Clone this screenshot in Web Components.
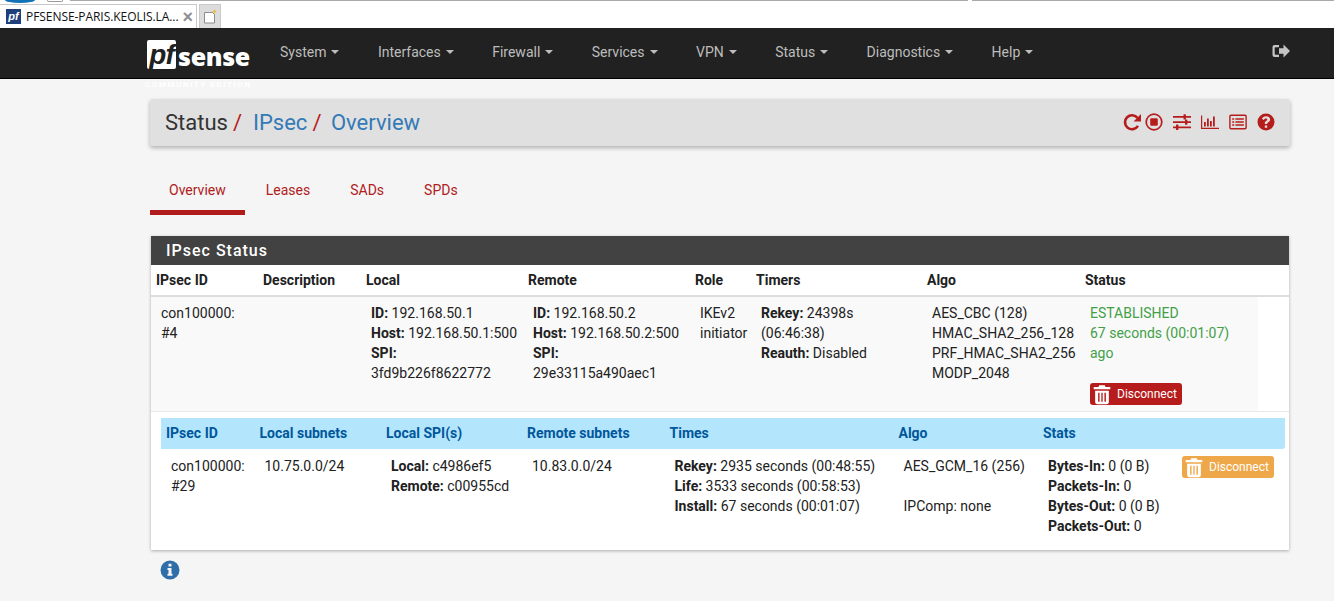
<!DOCTYPE html>
<html>
<head>
<meta charset="utf-8">
<title>pfSense IPsec Overview</title>
<style>
    html, body { margin: 0; padding: 0; background: #f5f5f5; overflow: hidden; }
    body { font: 14px/20px Roboto, sans-serif; color: #212121; height: 601px; }
</style>
</head>
<body>
<pf-browser-tabs></pf-browser-tabs>
<pf-navbar></pf-navbar>
<pf-page>
    <pf-breadcrumb></pf-breadcrumb>
    <pf-tabs></pf-tabs>
    <pf-panel heading="IPsec Status">
        <sa-table></sa-table>
    </pf-panel>
    <pf-info></pf-info>
</pf-page>

<script>
const ICONS = {
    signout: `<path d="M2.500 3h4.500v2.200H3.500a.8.800 0 0 0-.8.800v6a.8.800 0 0 0 .8.800H7V15H2.500A2 2 0 0 1 .5 13V5a2 2 0 0 1 2-2z"/><path d="M7 6.300h4.500V2.500L18 9l-6.500 6.500v-3.800H7z"/>`,
    repeat: `<path fill="none" stroke="currentColor" stroke-width="2.600" d="M15 12.900A7 7 0 1 1 14.600 5"/><path d="M18 1v7.400h-7.400z"/>`,
    stop: `<circle cx="9" cy="9" r="7.800" fill="none" stroke="currentColor" stroke-width="1.700"/><rect x="5.200" y="5.200" width="7.600" height="7.600" rx="1.200"/>`,
    sliders: `<path d="M0 3h18v1.800H0zM0 8.200h18V10H0zM0 13.400h18v1.800H0z"/><rect x="10.500" y="1.200" width="2.400" height="5.400" rx=".5"/><rect x="12" y="6.400" width="2.400" height="5.400" rx=".5"/><rect x="3" y="11.600" width="2.400" height="5.400" rx=".5"/>`,
    chart: `<path d="M0 2.500h1.200v12.300H18V16H0z"/><path d="M3 9h1.800v4.500H3zM6 5.500h1.800v8H6zM9 8h1.800v5.500H9zM12 3.500h1.800v10H12z"/>`,
    list: `<path fill-rule="evenodd" d="M2 1.500h14A1.800 1.800 0 0 1 17.800 3.300v11.400a1.800 1.800 0 0 1-1.800 1.800H2A1.800 1.800 0 0 1 .2 14.700V3.300A1.800 1.800 0 0 1 2 1.500zM2 3a.4.400 0 0 0-.4.400v11.200a.4.400 0 0 0 .4.400h14a.4.400 0 0 0 .4-.4V3.400A.4.400 0 0 0 16 3z"/><path d="M3.200 5.200h2v1.600h-2zM6.400 5.200h8.400v1.600H6.400zM3.200 8.200h2v1.600h-2zM6.400 8.200h8.400v1.600H6.400zM3.200 11.200h2v1.600h-2zM6.400 11.200h8.400v1.600H6.400z"/>`,
    question: `<path fill-rule="evenodd" d="M9 .5a8.500 8.500 0 1 1 0 17 8.500 8.500 0 0 1 0-17zM7.800 12.500v2.200h2.400v-2.200zM9 3.300c-2 0-3.400 1-4 2.500l1.700 1.200c.5-.9 1.100-1.500 2.200-1.500.8 0 1.400.4 1.400 1.100 0 .7-.5 1-1.200 1.500-.9.600-1.300 1.200-1.300 2.300v.6h2.400v-.4c0-.6.3-.9 1-1.400 1-.7 1.900-1.400 1.900-2.800 0-1.900-1.800-3.100-4.100-3.100z"/>`,
    trash: `<path d="M5.500 1.200h5l.7 1.600H15.500v2H.5v-2h4.300z"/><path fill-rule="evenodd" d="M1.800 6h12.400v10.500a2 2 0 0 1-2 1.900H3.800a2 2 0 0 1-2-1.900zM4.500 8v8h1.300V8zM7.400 8v8h1.200V8zM10.200 8v8h1.300V8z"/>`,
    info: `<path fill-rule="evenodd" d="M10 .5a9.500 9.500 0 1 1 0 19 9.500 9.500 0 0 1 0-19zM8.500 3.800v2.700h3V3.800zM7.500 8v2h1v3.800h-1v2h5v-2h-1V8z"/>`
};

class PfIcon extends HTMLElement {
    connectedCallback() {
        const w = this.getAttribute("w") || 18;
        const h = this.getAttribute("h") || 18;
        const box = this.getAttribute("box") || "0 0 18 18";
        this.attachShadow({ mode: "open" }).innerHTML = `
            <style>:host { display: inline-flex; line-height: 0; } svg { display: block; fill: currentColor; }</style>
            <svg width="${w}" height="${h}" viewBox="${box}">${ICONS[this.getAttribute("name")]}</svg>`;
    }
}
customElements.define("pf-icon", PfIcon);

class PfBrowserTabs extends HTMLElement {
    constructor() {
        super();
        this.attachShadow({ mode: "open" }).innerHTML = `
            <style>
                :host { display: flex; height: 28px; background: #fff; position: relative; font: 12px/16px "Open Sans", sans-serif; color: #111; box-sizing: border-box; padding-top: 4px; overflow: hidden; }
                .sliver { position: absolute; top: 0; height: 1px; background: #a9a9a9; }
                .cap { position: absolute; top: 0; }
                .tab { width: 197px; height: 24px; box-sizing: border-box; border: 1px solid #c9c9c9; border-bottom: 0; border-left: 0; display: flex; align-items: center; padding-left: 6px; white-space: nowrap; }
                .fav { width: 15px; height: 15px; background: #1f3f7c; color: #fff; font: italic bold 11px/15px "Liberation Sans", sans-serif; text-align: center; margin-right: 5px; flex: none; }
                .name { flex: 1; letter-spacing: -.06px; }
                .close { color: #8f8f8f; font: bold 18px/16px "Liberation Sans", sans-serif; margin-right: 3px; }
                .new { width: 22px; height: 24px; box-sizing: border-box; margin-left: 2px; background: #dcdcdc; border: 1px solid #c9c9c9; border-bottom: 0; display: flex; align-items: center; justify-content: center; }
            </style>
            <span class="cap" style="left:5px;width:30px;height:3px;background:#1272b8;border-radius:0 0 15px 15px / 0 0 3px 3px"></span>
            <span class="cap" style="left:47px;width:14px;height:1px;background:#fff;border:1px solid #999;border-top:0;border-radius:0 0 7px 7px"></span>
            <span class="sliver" style="left:70px;width:898px"></span>
            <span class="sliver" style="left:972px;right:0"></span>
            <div class="tab"><span class="fav">pf</span><span class="name">PFSENSE-PARIS.KEOLIS.LA...</span><span class="close">×</span></div>
            <div class="new">
                <svg width="16" height="16" viewBox="0 0 16 16"><path d="M2.500 3.500h8l2 2v8.500h-10z" fill="#fff" stroke="#8c8c8c"/><path d="M12.500 0l.8 1.700 1.700.8-1.700.8-.8 1.700-.8-1.700-1.700-.8 1.700-.8z" fill="#f5b73d"/></svg>
            </div>`;
    }
}
customElements.define("pf-browser-tabs", PfBrowserTabs);

class PfNavbar extends HTMLElement {
    constructor() {
        super();
        const items = ["System", "Interfaces", "Firewall", "Services", "VPN", "Status", "Diagnostics", "Help"];
        this.attachShadow({ mode: "open" }).innerHTML = `
            <style>
                :host { display: flex; align-items: center; height: 51px; box-sizing: border-box; background: #212121; border-bottom: 1px solid #000; position: relative; padding-left: 147px; color: #bdbdbd; font: 14px/20px Roboto, sans-serif; }
                .logo { display: flex; align-items: flex-start; width: 133px; flex: none; height: 29px; position: relative; top: 1px; }
                .pf { width: 29px; height: 29px; background: #fff; border-radius: 2px; color: #212121; font: italic 900 28px/29px "Liberation Sans", sans-serif; letter-spacing: -1px; text-align: center; flex: none; }
                .sense { color: #fff; font: 800 25px/29px "Open Sans", sans-serif; letter-spacing: -.3px; margin-left: 2px; margin-top: 2px; }
                .edition { position: absolute; left: -2px; top: 40px; color: #fff; font: bold 8px/10px Roboto, sans-serif; letter-spacing: 1.550px; white-space: nowrap; }
                nav { display: flex; gap: 38.450px; margin-top: -2px; }
                .item { display: flex; align-items: center; white-space: nowrap; }
                .caret { width: 0; height: 0; border: 4px solid transparent; border-top-color: currentColor; border-bottom: 0; margin-left: 5px; }
                .out { margin-left: auto; margin-right: 44px; margin-top: -5px; color: #c4c4c4; }
            </style>
            <div class="logo"><span class="pf">pf</span><span class="sense">sense</span><span class="edition">COMMUNITY EDITION</span></div>
            <nav>${items.map(i => `<span class="item">${i}<span class="caret"></span></span>`).join("")}</nav>
            <pf-icon class="out" name="signout"></pf-icon>`;
    }
}
customElements.define("pf-navbar", PfNavbar);

class PfPage extends HTMLElement {
    constructor() {
        super();
        this.attachShadow({ mode: "open" }).innerHTML = `
            <style>:host { display: block; width: 1140px; margin-left: 150px; padding-top: 20px; }</style>
            <slot></slot>`;
    }
}
customElements.define("pf-page", PfPage);

class PfBreadcrumb extends HTMLElement {
    constructor() {
        super();
        this.attachShadow({ mode: "open" }).innerHTML = `
            <style>
                :host { display: flex; align-items: center; justify-content: space-between; height: 47px; padding: 0 15px; background: #e0e0e0; border-radius: 3px; box-shadow: 0 2px 4px rgba(0,0,0,.28); font: 22px/30px Roboto, sans-serif; color: #333; }
                .crumbs { white-space: nowrap; }
                a { color: #337ab7; }
                i { font-style: normal; color: #b71c1c; margin: 0 11px 0 5px; }
                i.last { margin-right: 9.500px; }
                .tools { display: flex; align-items: center; color: #b71c1c; margin-top: -2px; }
            </style>
            <div class="crumbs">Status<i>/</i><a>IPsec</a><i class="last">/</i><a>Overview</a></div>
            <div class="tools">
                <pf-icon name="repeat" style="margin-right:4px"></pf-icon>
                <pf-icon name="stop" style="margin-right:10px"></pf-icon>
                <pf-icon name="sliders" style="margin-right:10px"></pf-icon>
                <pf-icon name="chart" style="margin-right:10px"></pf-icon>
                <pf-icon name="list" style="margin-right:10px"></pf-icon>
                <pf-icon name="question"></pf-icon>
            </div>`;
    }
}
customElements.define("pf-breadcrumb", PfBreadcrumb);

class PfTabs extends HTMLElement {
    constructor() {
        super();
        const tabs = ["Overview", "Leases", "SADs", "SPDs"];
        this.attachShadow({ mode: "open" }).innerHTML = `
            <style>
                :host { display: flex; gap: 2px; margin-top: 21px; font: 14px/20px Roboto, sans-serif; color: #b02020; }
                span { display: block; height: 48px; box-sizing: border-box; padding: 13px 19px 0; border-bottom: 5px solid transparent; }
                .on { border-bottom-color: #b01c1c; }
            </style>
            ${tabs.map((t, i) => `<span class="${i === 0 ? "on" : ""}">${t}</span>`).join("")}`;
    }
}
customElements.define("pf-tabs", PfTabs);

class PfPanel extends HTMLElement {
    constructor() {
        super();
        this.attachShadow({ mode: "open" }).innerHTML = `
            <style>
                :host { display: block; margin: 21px 1px 0; background: #fff; box-shadow: 0 1px 3px rgba(0,0,0,.3); }
                h2 { margin: 0; height: 29px; padding: 0 15px; background: #424242; color: #fff; font: 500 16px/30px Roboto, sans-serif; letter-spacing: 1px; }
            </style>
            <h2></h2>
            <slot></slot>`;
        this.shadowRoot.querySelector("h2").textContent = this.getAttribute("heading");
    }
}
customElements.define("pf-panel", PfPanel);

class PfButton extends HTMLElement {
    connectedCallback() {
        this.attachShadow({ mode: "open" }).innerHTML = `
            <style>
                :host { display: inline-flex; align-items: center; width: 92px; height: 22px; box-sizing: border-box; padding-left: 3px; border-radius: 3px; color: #fff; font: 12px/22px Roboto, sans-serif; background: ${this.getAttribute("color")}; white-space: nowrap; overflow: hidden; }
                pf-icon { margin-right: 6px; }
            </style>
            <pf-icon name="trash" w="18" h="21" box="0 0 16 19"></pf-icon><slot></slot>`;
    }
}
customElements.define("pf-button", PfButton);

class SaTable extends HTMLElement {
    constructor() {
        super();
        this.attachShadow({ mode: "open" }).innerHTML = `
            <style>
                :host { display: block; font: 14px/20px Roboto, sans-serif; color: #212121; }
                b { font-weight: 700; }
                table { border-collapse: collapse; table-layout: fixed; }
                td, th { padding: 0; text-align: left; vertical-align: top; }
                .parent { width: 1138px; }
                .parent th { height: 30px; padding: 5px; box-sizing: border-box; border-bottom: 2px solid #ddd; font-weight: 700; }
                .parent .row td { background: #f9f9f9; padding: 6px 10px 6px; box-sizing: border-box; height: 115px; border-bottom: 1px solid #e8e8e8; }
                .parent .row td.blank { background: #fff; padding: 0; }
                .green { color: #43a047; }
                .parent pf-button { margin-top: 20px; display: flex; }
                .wrap { padding: 6px 4px 14px 10px; }
                .child { width: 1124px; }
                .child th { height: 31px; padding: 0 5px 2px; background: #b3e5fc; color: #01579b; font-weight: 700; box-sizing: border-box; vertical-align: middle; }
                .child th:last-child { border-radius: 0 0 3px 0; }
                .child td { padding: 7px 10px 0; }
            </style>
            <table class="parent">
                <colgroup>
                    <col style="width:107px"><col style="width:103px"><col style="width:162px"><col style="width:167px"><col style="width:61px"><col style="width:171px"><col style="width:158px"><col style="width:178px"><col>
                </colgroup>
                <tr>
                    <th>IPsec ID</th><th>Description</th><th>Local</th><th>Remote</th><th>Role</th><th>Timers</th><th>Algo</th><th colspan="2">Status</th>
                </tr>
                <tr class="row">
                    <td>con100000:<br>#4</td>
                    <td></td>
                    <td style="padding-right:0"><b>ID:</b> 192.168.50.1<br><b>Host:</b> 192.168.50.1:500<br><b>SPI:</b><br>3fd9b226f8622772</td>
                    <td style="padding-right:0"><b>ID:</b> 192.168.50.2<br><b>Host:</b> 192.168.50.2:500<br><b>SPI:</b><br>29e33115a490aec1</td>
                    <td style="padding-right:0">IKEv2<br>initiator</td>
                    <td style="padding-right:0"><b>Rekey:</b> 24398s<br>(06:46:38)<br><b>Reauth:</b> Disabled</td>
                    <td style="padding-right:0">AES_CBC (128)<br>HMAC_SHA2_256_128<br>PRF_HMAC_SHA2_256<br>MODP_2048</td>
                    <td style="padding-right:14px"><span class="green">ESTABLISHED<br>67 seconds (00:01:07) ago</span><pf-button color="#b71c1c">Disconnect</pf-button></td>
                    <td class="blank"></td>
                </tr>
            </table>
            <div class="wrap">
                <table class="child">
                    <colgroup>
                        <col style="width:93.500px"><col style="width:126.500px"><col style="width:141px"><col style="width:142.500px"><col style="width:229px"><col style="width:144.500px"><col>
                    </colgroup>
                    <tr>
                        <th>IPsec ID</th><th>Local subnets</th><th>Local SPI(s)</th><th>Remote subnets</th><th>Times</th><th>Algo</th><th>Stats</th>
                    </tr>
                    <tr>
                        <td>con100000:<br>#29</td>
                        <td style="padding-right:0">10.75.0.0/24</td>
                        <td style="padding-right:0"><b>Local:</b> c4986ef5<br><b>Remote:</b> c00955cd</td>
                        <td>10.83.0.0/24</td>
                        <td style="padding-right:0"><b>Rekey:</b> 2935 seconds (00:48:55)<br><b>Life:</b> 3533 seconds (00:58:53)<br><b>Install:</b> 67 seconds (00:01:07)</td>
                        <td style="padding-right:0">AES_GCM_16 (256)<br><br>IPComp: none</td>
                        <td style="padding-right:0">
                            <div style="display:flex;justify-content:space-between;padding-right:11px">
                                <div><b>Bytes-In:</b> 0 (0 B)<br><b>Packets-In:</b> 0<br><b>Bytes-Out:</b> 0 (0 B)<br><b>Packets-Out:</b> 0</div>
                                <pf-button color="#eea84a" style="margin-top:0">Disconnect</pf-button>
                            </div>
                        </td>
                    </tr>
                </table>
            </div>`;
    }
}
customElements.define("sa-table", SaTable);

class PfInfo extends HTMLElement {
    constructor() {
        super();
        this.attachShadow({ mode: "open" }).innerHTML = `
            <style>:host { display: flex; margin: 10px 0 0 10px; color: #2f6ea8; }</style>
            <pf-icon name="info" w="20" h="20" box="0 0 20 20"></pf-icon>`;
    }
}
customElements.define("pf-info", PfInfo);
</script>
</body>
</html>
